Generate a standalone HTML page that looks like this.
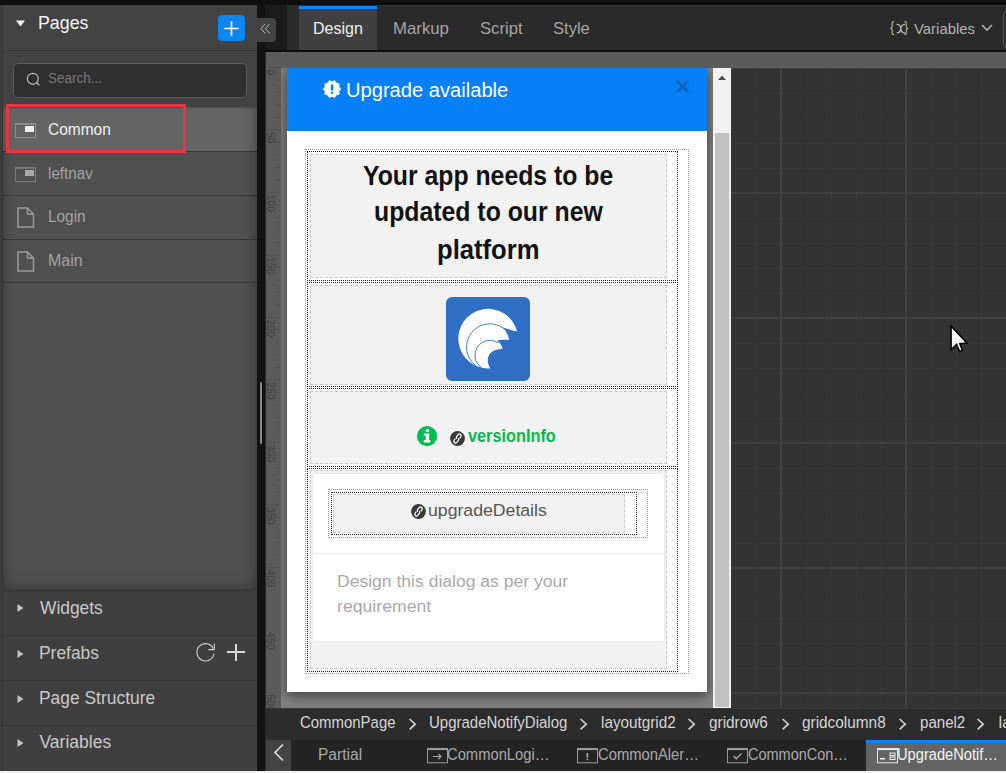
<!DOCTYPE html>
<html><head><meta charset="utf-8"><style>
html,body{margin:0;padding:0;}
body{width:1006px;height:773px;overflow:hidden;position:relative;background:#2a2a2a;font-family:"Liberation Sans",sans-serif;}
.a{position:absolute;}
.t{position:absolute;white-space:nowrap;line-height:1;transform-origin:0 0;}
svg{overflow:visible}
</style></head><body>
<div class="a" style="left:0px;top:0px;width:1006px;height:5px;background:#0f0f0f"></div>
<div class="a" style="left:0px;top:5px;width:257px;height:766px;background:#434343"></div>
<div class="a" style="left:0px;top:5px;width:2px;height:766px;background:#3d3d3d"></div>
<div class="a" style="left:2px;top:5px;width:1px;height:766px;background:#353535"></div>
<div class="a" style="left:3px;top:50px;width:254px;height:1px;background:#393939"></div>
<svg class="a" style="left:15px;top:20px" width="11" height="8"><path d="M1 0.5 L10 0.5 L5.5 6.5 Z" fill="#f4f4f4"/></svg>
<div class="t" style="left:37.82px;top:14.30px;font-size:18px;color:#f4f4f4;transform:scaleX(0.9875);">Pages</div>
<div class="a" style="left:218px;top:15px;width:27px;height:26px;background:#0d86f2;border-radius:4px"></div>
<svg class="a" style="left:218px;top:15px" width="27" height="26"><path d="M6.3 13.5 L20.7 13.5 M13.5 6.3 L13.5 20.7" stroke="#fff" stroke-width="1.7"/></svg>
<div class="a" style="left:13px;top:63px;width:234px;height:34.5px;background:#2f2f2f;border:1px solid #5d5d5d;border-radius:5px;box-sizing:border-box"></div>
<svg class="a" style="left:25px;top:72px" width="16" height="16"><circle cx="7.8" cy="6.8" r="5.5" fill="none" stroke="#bdbdbd" stroke-width="1.2"/><path d="M11.8 10.8 L14.4 13.4" stroke="#bdbdbd" stroke-width="1.3"/></svg>
<div class="t" style="left:47.82px;top:71.67px;font-size:13.8px;color:#7a7a7a;transform:scaleX(0.9755);">Search...</div>
<div class="a" style="left:3px;top:107px;width:254px;height:483px;background:#505050"></div>
<div class="a" style="left:3px;top:108px;width:254px;height:43px;background:#646464"></div>
<div class="a" style="left:3px;top:151px;width:254px;height:1px;background:#383838"></div>
<div class="a" style="left:3px;top:195px;width:254px;height:1px;background:#383838"></div>
<div class="a" style="left:3px;top:239px;width:254px;height:1px;background:#383838"></div>
<div class="a" style="left:3px;top:282px;width:254px;height:1px;background:#383838"></div>
<div class="a" style="left:3px;top:107px;width:254px;height:483px;box-shadow:inset 0 -10px 14px -6px rgba(0,0,0,.22), inset 8px 0 10px -8px rgba(0,0,0,.25), inset -10px 0 12px -8px rgba(0,0,0,.25)"></div>
<div class="a" style="left:6px;top:104px;width:180px;height:49px;border:3px solid #ee3340;box-sizing:border-box"></div>
<svg class="a" style="left:15px;top:123px" width="22" height="16"><rect x="0.5" y="0.5" width="20" height="14" fill="none" stroke="#8c8c8c" stroke-width="1"/><rect x="0" y="0" width="21" height="1.8" fill="#8c8c8c"/><rect x="10" y="3" width="9" height="6" fill="#f0f0f0"/></svg>
<svg class="a" style="left:15px;top:167px" width="22" height="16"><rect x="0.5" y="0.5" width="20" height="14" fill="none" stroke="#7c7c7c" stroke-width="1"/><rect x="0" y="0" width="21" height="1.8" fill="#7c7c7c"/><rect x="10" y="3" width="9" height="6" fill="#a8a8a8"/></svg>
<svg class="a" style="left:17px;top:207px" width="19" height="22"><path d="M1 1 L10.5 1 L16.5 7 L16.5 20 L1 20 Z M10.5 1 L10.5 7 L16.5 7" fill="none" stroke="#9a9a9a" stroke-width="1.5" stroke-linejoin="miter"/></svg>
<svg class="a" style="left:17px;top:251px" width="19" height="22"><path d="M1 1 L10.5 1 L16.5 7 L16.5 20 L1 20 Z M10.5 1 L10.5 7 L16.5 7" fill="none" stroke="#9a9a9a" stroke-width="1.5" stroke-linejoin="miter"/></svg>
<div class="t" style="left:47.62px;top:121.87px;font-size:15.8px;color:#f2f2f2;transform:scaleX(0.9790);">Common</div>
<div class="t" style="left:47.94px;top:165.87px;font-size:15.8px;color:#a3a3a3;transform:scaleX(0.9630);">leftnav</div>
<div class="t" style="left:47.93px;top:208.97px;font-size:15.8px;color:#a3a3a3;transform:scaleX(0.9730);">Login</div>
<div class="t" style="left:47.89px;top:252.97px;font-size:15.8px;color:#a3a3a3;transform:scaleX(1.0125);">Main</div>
<div class="a" style="left:3px;top:590px;width:254px;height:181px;background:#3f3f3f;border-radius:4px 4px 0 0;border-top:1px solid #353535;box-sizing:border-box"></div>
<div class="a" style="left:3px;top:635px;width:254px;height:1px;background:#333333"></div>
<div class="a" style="left:3px;top:680px;width:254px;height:1px;background:#333333"></div>
<div class="a" style="left:3px;top:725px;width:254px;height:1px;background:#333333"></div>
<svg class="a" style="left:16px;top:603.4px" width="10" height="10"><path d="M1.5 1 L7.5 5 L1.5 9 Z" fill="#c4c4c4"/></svg>
<div class="t" style="left:39.50px;top:599.52px;font-size:17.5px;color:#c9c9c9;transform:scaleX(0.9937);">Widgets</div>
<svg class="a" style="left:16px;top:648.5px" width="10" height="10"><path d="M1.5 1 L7.5 5 L1.5 9 Z" fill="#c4c4c4"/></svg>
<div class="t" style="left:38.51px;top:644.62px;font-size:17.5px;color:#c9c9c9;transform:scaleX(0.9949);">Prefabs</div>
<svg class="a" style="left:16px;top:693.5px" width="10" height="10"><path d="M1.5 1 L7.5 5 L1.5 9 Z" fill="#c4c4c4"/></svg>
<div class="t" style="left:38.51px;top:689.62px;font-size:17.5px;color:#c9c9c9;transform:scaleX(0.9948);">Page Structure</div>
<svg class="a" style="left:16px;top:737.8px" width="10" height="10"><path d="M1.5 1 L7.5 5 L1.5 9 Z" fill="#c4c4c4"/></svg>
<div class="t" style="left:39.50px;top:733.92px;font-size:17.5px;color:#c9c9c9;">Variables</div>
<svg class="a" style="left:196px;top:643px" width="20" height="20"><path d="M17.16 5.4 A8.6 8.6 0 1 0 18.0 10.5" fill="none" stroke="#d4d4d4" stroke-width="1.1"/><path d="M18.3 0.8 L18.3 6.6 L12.4 6.6" fill="none" stroke="#d4d4d4" stroke-width="1.1"/></svg>
<div class="a" style="left:227px;top:651.3px;width:18px;height:2.0px;background:#d8d8d8"></div>
<div class="a" style="left:235px;top:643.7px;width:2px;height:17.299999999999955px;background:#d8d8d8"></div>
<div class="a" style="left:257px;top:5px;width:8px;height:766px;background:#121212"></div>
<div class="a" style="left:260px;top:382px;width:2px;height:62px;background:#8a8a8a;border-radius:1px"></div>
<div class="a" style="left:265px;top:5px;width:741px;height:45px;background:#2a2a2a"></div>
<div class="a" style="left:265px;top:5px;width:22px;height:45px;background:#1b1b1b"></div>
<div class="a" style="left:287px;top:5px;width:12px;height:45px;background:#2b2b2b"></div>
<div class="a" style="left:377px;top:5px;width:629px;height:1px;background:#363636"></div>
<div class="a" style="left:299px;top:9px;width:78px;height:41px;background:#404040"></div>
<div class="a" style="left:299px;top:6px;width:78px;height:3px;background:#0a84ff"></div>
<div class="t" style="left:313.01px;top:19.83px;font-size:16.2px;color:#efefef;transform:scaleX(0.9878);">Design</div>
<div class="t" style="left:393.36px;top:19.83px;font-size:16.2px;color:#a6a6a6;transform:scaleX(1.0365);">Markup</div>
<div class="t" style="left:479.57px;top:19.83px;font-size:16.2px;color:#a6a6a6;transform:scaleX(1.0275);">Script</div>
<div class="t" style="left:552.68px;top:19.83px;font-size:16.2px;color:#a6a6a6;transform:scaleX(1.0235);">Style</div>
<div class="t" style="left:889.60px;top:19.43px;font-size:15.5px;color:#b3b3b3;transform:scaleX(0.8400);">{</div>
<div class="t" style="left:903.80px;top:19.43px;font-size:15.5px;color:#b3b3b3;transform:scaleX(0.8400);">}</div>
<svg class="a" style="left:896px;top:22.8px" width="10" height="12"><path d="M0.6 1.3 Q4.3 1.0 4.8 5.6 Q5.3 10.2 9.2 9.9 M9.0 1.3 Q5.3 1.4 4.8 5.6 Q4.3 10.0 0.7 9.9" fill="none" stroke="#b3b3b3" stroke-width="1.3"/></svg>
<div class="t" style="left:914.10px;top:20.85px;font-size:15px;color:#b3b3b3;transform:scaleX(0.9934);">Variables</div>
<svg class="a" style="left:981px;top:24px" width="13" height="8"><path d="M1 1 L6 6 L11 1" fill="none" stroke="#b3b3b3" stroke-width="1.6"/></svg>
<div class="a" style="left:1003px;top:11px;width:17px;height:37px;border:1px solid #585858;border-radius:4px;box-sizing:border-box"></div>
<div class="a" style="left:265px;top:50px;width:741px;height:2px;background:#0d0d0d"></div>
<div class="a" style="left:257px;top:18px;width:19px;height:24px;background:#434343;border-radius:0 4px 4px 0"></div>
<svg class="a" style="left:260px;top:22.5px" width="14" height="12"><path d="M5.2 1 L1 5.7 L5.2 10.4 M9.6 1 L5.4 5.7 L9.6 10.4" fill="none" stroke="#b9b9b9" stroke-width="1"/></svg>
<div class="a" style="left:266px;top:52px;width:740px;height:656px;background:#5b5b5b"></div>
<div class="a" style="left:281px;top:68px;width:432px;height:640px;background:#808080"></div>
<div class="a" style="left:731px;top:68px;width:275px;height:640px;background-color:#333333;background-image:linear-gradient(90deg,#404040 2px,transparent 2px),linear-gradient(180deg,#404040 2px,transparent 2px),linear-gradient(90deg,#373737 1px,transparent 1px),linear-gradient(180deg,#373737 1px,transparent 1px);background-size:125px 125px,125px 125px,25px 25px,25px 25px;background-position:49px 0,0 124px,0 0,0 0"></div>
<svg class="a" style="left:949px;top:324px" width="22" height="30"><path d="M2.1 2.2 L2.1 25.8 L7.6 20.3 L10.6 27.4 L13.3 26.2 L10.8 19.6 L17.9 19 Z" fill="#fff" stroke="#000" stroke-width="1.5" stroke-linejoin="miter"/></svg>
<div class="a" style="left:287px;top:68px;width:420px;height:624px;background:#fff;box-shadow:0 3px 12px rgba(0,0,0,.55)"></div>
<div class="a" style="left:287px;top:68px;width:420px;height:63px;background:#0580f7"></div>
<svg class="a" style="left:322.4px;top:79.3px" width="20" height="20"><polygon points="19.30,10.00 17.32,12.38 17.52,15.47 14.53,16.23 12.87,18.84 10.00,17.70 7.13,18.84 5.47,16.23 2.48,15.47 2.68,12.38 0.70,10.00 2.68,7.62 2.48,4.53 5.47,3.77 7.13,1.16 10.00,2.30 12.87,1.16 14.53,3.77 17.52,4.53 17.32,7.62" fill="#fff" stroke="#fff" stroke-width="0.6" stroke-linejoin="round" transform="translate(10 10) scale(0.96) translate(-10 -10)"/><rect x="8.9" y="5.6" width="2.4" height="5.9" fill="#0580f7"/><rect x="8.9" y="12.7" width="2.4" height="2.1" fill="#0580f7"/></svg>
<div class="t" style="left:346.29px;top:80.00px;font-size:20px;color:#ffffff;transform:scaleX(1.0063);">Upgrade available</div>
<svg class="a" style="left:674px;top:78px" width="17" height="17"><path d="M3 3 L14 14 M14 3 L3 14" stroke="#0b62bd" stroke-width="3"/></svg>
<div class="a" style="left:305px;top:149px;width:384px;height:525px;border:1px dotted #9a9a9a;box-sizing:border-box"></div>
<div class="a" style="left:307px;top:151px;width:371px;height:130px;border:1px dotted #222;box-sizing:border-box"></div>
<div class="a" style="left:307px;top:282px;width:371px;height:105px;border:1px dotted #222;box-sizing:border-box"></div>
<div class="a" style="left:307px;top:388px;width:371px;height:79px;border:1px dotted #222;box-sizing:border-box"></div>
<div class="a" style="left:307px;top:468px;width:371px;height:204px;border:1px dotted #222;box-sizing:border-box"></div>
<div class="a" style="left:310px;top:154px;width:357px;height:124px;border:1px dashed #c8c8c8;box-sizing:border-box;background:#f2f2f2"></div>
<div class="a" style="left:310px;top:285px;width:357px;height:100px;border:1px dashed #c8c8c8;box-sizing:border-box;background:#f2f2f2"></div>
<div class="a" style="left:310px;top:391px;width:357px;height:73px;border:1px dashed #c8c8c8;box-sizing:border-box;background:#f2f2f2"></div>
<div class="a" style="left:310px;top:470px;width:357px;height:199px;border:1px dashed #c8c8c8;box-sizing:border-box;background:#f2f2f2"></div>
<div class="t" style="left:362.72px;top:161.43px;font-size:28.2px;color:#121212;font-weight:700;transform:scaleX(0.8795);">Your app needs to be</div>
<div class="t" style="left:373.64px;top:197.33px;font-size:28.2px;color:#121212;font-weight:700;transform:scaleX(0.8802);">updated to our new</div>
<div class="t" style="left:437.08px;top:235.13px;font-size:28.2px;color:#121212;font-weight:700;transform:scaleX(0.9092);">platform</div>
<svg class="a" style="left:446px;top:297px" width="84" height="84" viewBox="0 0 84 84"><rect width="84" height="84" rx="6" fill="#2f6fc6"/><path d="M71 34.3 A29.8 29.8 0 1 0 44.3 71.4 C40 65 41 56 49 53.2 C52 52 55 52.5 56.6 51.5 C55.5 47.5 53 45 50.7 43.5 C54 42.8 60 42.5 63.3 42.9 C62 37 59.5 33 56 30.2 C61 31.5 66 34 71 34.3 Z" fill="#fff"/><path d="M29.8 68.7 A23 23 0 0 1 57.9 31.5" fill="none" stroke="#2f6fc6" stroke-width="0.9"/><path d="M35.3 70.5 A14.3 14.3 0 0 1 52.5 46" fill="none" stroke="#2f6fc6" stroke-width="0.9"/></svg>
<svg class="a" style="left:417px;top:425.5px" width="21" height="21"><circle cx="10.05" cy="10.1" r="10.15" fill="#05bd51"/><rect x="8.8" y="3.4" width="3.3" height="2.6" rx="0.3" fill="#fff"/><path d="M6.8 7.4 L12.1 7.4 L12.1 14.1 L13.3 14.1 L13.3 16.4 L6.8 16.4 L6.8 14.1 L8.8 14.1 L8.8 9.4 L6.8 9.4 Z" fill="#fff"/></svg>
<svg class="a" style="left:450px;top:431px" width="16" height="16"><circle cx="7.5" cy="7.5" r="7.4" fill="#3a3a3a"/><g transform="translate(7.5 7.5) rotate(-55)" fill="none" stroke="#fff" stroke-width="1.25"><path d="M-0.7 -0.5 A1.7 1.7 0 0 1 1.0 -1.75 L3.3 -1.75 A1.75 1.75 0 0 1 3.3 1.75 L1.3 1.75"/><path d="M0.7 0.5 A1.7 1.7 0 0 1 -1.0 1.75 L-3.3 1.75 A1.75 1.75 0 0 1 -3.3 -1.75 L-1.3 -1.75"/></g></svg>
<div class="t" style="left:468.00px;top:426.90px;font-size:18px;color:#05bb50;font-weight:700;transform:scaleX(0.9052);">versionInfo</div>
<div class="a" style="left:313px;top:474px;width:351px;height:167px;background:#fff;border-radius:3px;box-shadow:0 0 0 1px #ebebeb"></div>
<div class="a" style="left:313px;top:553px;width:351px;height:1px;background:#ececec"></div>
<div class="a" style="left:328px;top:489px;width:320px;height:49px;border:1px dotted #9a9a9a;box-sizing:border-box"></div>
<div class="a" style="left:331px;top:492px;width:306px;height:43px;border:1px dotted #222;box-sizing:border-box"></div>
<div class="a" style="left:333px;top:494px;width:292px;height:39px;border:1px dashed #c8c8c8;box-sizing:border-box;background:#f2f2f2"></div>
<svg class="a" style="left:411px;top:504px" width="16" height="16"><circle cx="7.5" cy="7.5" r="7.4" fill="#3a3a3a"/><g transform="translate(7.5 7.5) rotate(-55)" fill="none" stroke="#fff" stroke-width="1.25"><path d="M-0.7 -0.5 A1.7 1.7 0 0 1 1.0 -1.75 L3.3 -1.75 A1.75 1.75 0 0 1 3.3 1.75 L1.3 1.75"/><path d="M0.7 0.5 A1.7 1.7 0 0 1 -1.0 1.75 L-3.3 1.75 A1.75 1.75 0 0 1 -3.3 -1.75 L-1.3 -1.75"/></g></svg>
<div class="t" style="left:428.45px;top:502.82px;font-size:16.8px;color:#555555;transform:scaleX(1.0523);">upgradeDetails</div>
<div class="t" style="left:337.19px;top:572.50px;font-size:17.3px;color:#a9a9a9;transform:scaleX(1.0150);">Design this dialog as per your</div>
<div class="t" style="left:336.98px;top:597.89px;font-size:17.3px;color:#a9a9a9;transform:scaleX(1.0220);">requirement</div>
<div class="a" style="left:713px;top:68px;width:18px;height:640px;background:#f1f1f1"></div>
<svg class="a" style="left:716px;top:73px" width="12" height="9"><path d="M2 7 L6 2.5 L10 7 Z" fill="#505050"/></svg>
<div class="a" style="left:715px;top:133px;width:14px;height:574px;background:#c1c1c1"></div>
<div class="a" style="left:266px;top:52px;width:740px;height:16px;background:#5b5b5b"></div>
<div class="a" style="left:266px;top:68px;width:15px;height:640px;background:#5b5b5b"></div>
<svg class="a" style="left:266px;top:0px" width="15" height="708"><rect x="0" y="67.00" width="15" height="1" fill="#525252"/><rect x="10" y="79.50" width="5" height="1" fill="#4f4f4f"/><rect x="10" y="92.00" width="5" height="1" fill="#4f4f4f"/><rect x="10" y="104.50" width="5" height="1" fill="#4f4f4f"/><rect x="10" y="117.00" width="5" height="1" fill="#4f4f4f"/><rect x="0" y="129.50" width="15" height="1" fill="#525252"/><rect x="10" y="142.00" width="5" height="1" fill="#4f4f4f"/><rect x="10" y="154.50" width="5" height="1" fill="#4f4f4f"/><rect x="10" y="167.00" width="5" height="1" fill="#4f4f4f"/><rect x="10" y="179.50" width="5" height="1" fill="#4f4f4f"/><rect x="0" y="192.00" width="15" height="1" fill="#525252"/><rect x="10" y="204.50" width="5" height="1" fill="#4f4f4f"/><rect x="10" y="217.00" width="5" height="1" fill="#4f4f4f"/><rect x="10" y="229.50" width="5" height="1" fill="#4f4f4f"/><rect x="10" y="242.00" width="5" height="1" fill="#4f4f4f"/><rect x="0" y="254.50" width="15" height="1" fill="#525252"/><rect x="10" y="267.00" width="5" height="1" fill="#4f4f4f"/><rect x="10" y="279.50" width="5" height="1" fill="#4f4f4f"/><rect x="10" y="292.00" width="5" height="1" fill="#4f4f4f"/><rect x="10" y="304.50" width="5" height="1" fill="#4f4f4f"/><rect x="0" y="317.00" width="15" height="1" fill="#525252"/><rect x="10" y="329.50" width="5" height="1" fill="#4f4f4f"/><rect x="10" y="342.00" width="5" height="1" fill="#4f4f4f"/><rect x="10" y="354.50" width="5" height="1" fill="#4f4f4f"/><rect x="10" y="367.00" width="5" height="1" fill="#4f4f4f"/><rect x="0" y="379.50" width="15" height="1" fill="#525252"/><rect x="10" y="392.00" width="5" height="1" fill="#4f4f4f"/><rect x="10" y="404.50" width="5" height="1" fill="#4f4f4f"/><rect x="10" y="417.00" width="5" height="1" fill="#4f4f4f"/><rect x="10" y="429.50" width="5" height="1" fill="#4f4f4f"/><rect x="0" y="442.00" width="15" height="1" fill="#525252"/><rect x="10" y="454.50" width="5" height="1" fill="#4f4f4f"/><rect x="10" y="467.00" width="5" height="1" fill="#4f4f4f"/><rect x="10" y="479.50" width="5" height="1" fill="#4f4f4f"/><rect x="10" y="492.00" width="5" height="1" fill="#4f4f4f"/><rect x="0" y="504.50" width="15" height="1" fill="#525252"/><rect x="10" y="517.00" width="5" height="1" fill="#4f4f4f"/><rect x="10" y="529.50" width="5" height="1" fill="#4f4f4f"/><rect x="10" y="542.00" width="5" height="1" fill="#4f4f4f"/><rect x="10" y="554.50" width="5" height="1" fill="#4f4f4f"/><rect x="0" y="567.00" width="15" height="1" fill="#525252"/><text transform="translate(0.8,69.50) rotate(90)" font-family="Liberation Sans" font-size="10.5" fill="#3f3f3f">0</text><text transform="translate(0.8,132.00) rotate(90)" font-family="Liberation Sans" font-size="10.5" fill="#3f3f3f">50</text><text transform="translate(0.8,194.50) rotate(90)" font-family="Liberation Sans" font-size="10.5" fill="#3f3f3f">100</text><text transform="translate(0.8,257.00) rotate(90)" font-family="Liberation Sans" font-size="10.5" fill="#3f3f3f">150</text><text transform="translate(0.8,319.50) rotate(90)" font-family="Liberation Sans" font-size="10.5" fill="#3f3f3f">200</text><text transform="translate(0.8,382.00) rotate(90)" font-family="Liberation Sans" font-size="10.5" fill="#3f3f3f">250</text><text transform="translate(0.8,444.50) rotate(90)" font-family="Liberation Sans" font-size="10.5" fill="#3f3f3f">300</text><text transform="translate(0.8,507.00) rotate(90)" font-family="Liberation Sans" font-size="10.5" fill="#3f3f3f">350</text><text transform="translate(0.8,569.50) rotate(90)" font-family="Liberation Sans" font-size="10.5" fill="#3f3f3f">400</text><text transform="translate(0.8,632.00) rotate(90)" font-family="Liberation Sans" font-size="10.5" fill="#3f3f3f">450</text><text transform="translate(0.8,694.50) rotate(90)" font-family="Liberation Sans" font-size="10.5" fill="#3f3f3f">500</text></svg>
<div class="a" style="left:266px;top:708px;width:740px;height:32px;background:#2c2c2c"></div>
<div class="a" style="left:266px;top:708px;width:740px;height:1px;background:#3a3a3a"></div>
<div class="t" style="left:300.28px;top:713.64px;font-size:16.3px;color:#d6d6d6;transform:scaleX(0.9176);">CommonPage</div>
<svg class="a" style="left:407.7px;top:718px" width="10" height="13"><path d="M1.6 1 L7.2 6.2 L1.6 11.4" fill="none" stroke="#d0d0d0" stroke-width="1.7"/></svg>
<div class="t" style="left:429.48px;top:713.64px;font-size:16.3px;color:#d6d6d6;transform:scaleX(0.9209);">UpgradeNotifyDialog</div>
<svg class="a" style="left:578.6px;top:718px" width="10" height="13"><path d="M1.6 1 L7.2 6.2 L1.6 11.4" fill="none" stroke="#d0d0d0" stroke-width="1.7"/></svg>
<div class="t" style="left:600.96px;top:713.64px;font-size:16.3px;color:#d6d6d6;transform:scaleX(0.9372);">layoutgrid2</div>
<svg class="a" style="left:687.4px;top:718px" width="10" height="13"><path d="M1.6 1 L7.2 6.2 L1.6 11.4" fill="none" stroke="#d0d0d0" stroke-width="1.7"/></svg>
<div class="t" style="left:709.06px;top:713.64px;font-size:16.3px;color:#d6d6d6;transform:scaleX(0.9426);">gridrow6</div>
<svg class="a" style="left:780.5px;top:718px" width="10" height="13"><path d="M1.6 1 L7.2 6.2 L1.6 11.4" fill="none" stroke="#d0d0d0" stroke-width="1.7"/></svg>
<div class="t" style="left:801.86px;top:713.64px;font-size:16.3px;color:#d6d6d6;transform:scaleX(0.9437);">gridcolumn8</div>
<svg class="a" style="left:898.2px;top:718px" width="10" height="13"><path d="M1.6 1 L7.2 6.2 L1.6 11.4" fill="none" stroke="#d0d0d0" stroke-width="1.7"/></svg>
<div class="t" style="left:919.57px;top:713.64px;font-size:16.3px;color:#d6d6d6;transform:scaleX(0.9255);">panel2</div>
<svg class="a" style="left:976.4px;top:718px" width="10" height="13"><path d="M1.6 1 L7.2 6.2 L1.6 11.4" fill="none" stroke="#d0d0d0" stroke-width="1.7"/></svg>
<div class="t" style="left:998.60px;top:713.64px;font-size:16.3px;color:#d6d6d6;">layoutgrid2</div>
<div class="a" style="left:266px;top:740px;width:740px;height:31px;background:#242424"></div>
<div class="a" style="left:266px;top:740px;width:25px;height:31px;background:#434343"></div>
<svg class="a" style="left:272px;top:743px" width="14" height="20"><path d="M11 1.5 L3 9.5 L11 17.5" fill="none" stroke="#e6e6e6" stroke-width="1.6"/></svg>
<div class="t" style="left:317.73px;top:746.90px;font-size:16px;color:#a8a8a8;transform:scaleX(0.9721);">Partial</div>
<svg class="a" style="left:427px;top:748px" width="22" height="16"><rect x="0.5" y="0.5" width="20" height="14.3" fill="none" stroke="#9a9a9a" stroke-width="1"/><rect x="0.5" y="0.5" width="20" height="1.6" fill="#9a9a9a"/><path d="M6 8.5 L14 8.5 M11.5 6 L14 8.5 L11.5 11" fill="none" stroke="#aaa" stroke-width="1.1"/></svg>
<div class="t" style="left:447.38px;top:746.80px;font-size:16px;color:#aaaaaa;transform:scaleX(0.9222);">CommonLogi…</div>
<svg class="a" style="left:577px;top:748px" width="22" height="16"><rect x="0.5" y="0.5" width="20" height="14.3" fill="none" stroke="#9a9a9a" stroke-width="1"/><rect x="0.5" y="0.5" width="20" height="1.6" fill="#9a9a9a"/><rect x="9.6" y="5" width="1.6" height="4.5" fill="#aaa"/><rect x="9.6" y="10.5" width="1.6" height="1.6" fill="#aaa"/></svg>
<div class="t" style="left:597.98px;top:746.80px;font-size:16px;color:#aaaaaa;transform:scaleX(0.9236);">CommonAler…</div>
<svg class="a" style="left:727px;top:748px" width="22" height="16"><rect x="0.5" y="0.5" width="20" height="14.3" fill="none" stroke="#9a9a9a" stroke-width="1"/><rect x="0.5" y="0.5" width="20" height="1.6" fill="#9a9a9a"/><path d="M6.5 8 L9.3 10.8 L14.5 5.5" fill="none" stroke="#aaa" stroke-width="1.3"/></svg>
<div class="t" style="left:748.09px;top:746.80px;font-size:16px;color:#aaaaaa;transform:scaleX(0.9056);">CommonCon…</div>
<div class="a" style="left:866px;top:740px;width:140px;height:31px;background:#646464"></div>
<div class="a" style="left:866px;top:740px;width:140px;height:3px;background:#0a84ff"></div>
<svg class="a" style="left:877px;top:748px" width="22" height="16"><rect x="0.5" y="0.5" width="20" height="14.3" fill="none" stroke="#e8e8e8" stroke-width="1"/><rect x="0.5" y="0.5" width="20" height="1.6" fill="#e8e8e8"/><rect x="3" y="10" width="5" height="1.5" fill="#eee"/><rect x="13" y="5" width="5" height="2.5" fill="none" stroke="#eee" stroke-width="1"/><rect x="13" y="9" width="5" height="2.5" fill="none" stroke="#eee" stroke-width="1"/></svg>
<div class="t" style="left:897.48px;top:746.80px;font-size:16px;color:#f2f2f2;transform:scaleX(0.9159);">UpgradeNotif…</div>
<div class="a" style="left:0px;top:771px;width:1006px;height:2px;background:#f3f3f3"></div>
</body></html>
